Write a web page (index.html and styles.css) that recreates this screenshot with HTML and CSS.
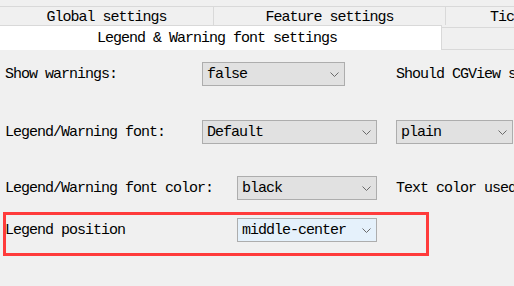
FILE: index.html
```html
<!DOCTYPE html>
<html>
<head>
<meta charset="utf-8">
<link rel="stylesheet" href="styles.css">
</head>
<body>
<div class="tabs">
  <div class="tab-row back">
    <div class="tab t-global"><span>Global settings</span></div>
    <div class="tab t-feature"><span>Feature settings</span></div>
    <div class="tab t-tic"><span>Tic</span></div>
  </div>
  <div class="tab-row front">
    <div class="tab selected"><span>Legend &amp; Warning font settings</span></div>
    <div class="tab filler"></div>
  </div>
</div>
<div class="panel">
  <div class="row r1">
    <div class="label w1">Show warnings:</div>
    <div class="combo c-false"><span>false</span><svg class="chev" width="9" height="5" viewBox="0 0 9 5"><polyline points="0.5,0.5 4.5,4.5 8.5,0.5" fill="none" stroke="#6a6a6a" stroke-width="1"/></svg></div>
    <div class="desc d1">Should CGView s</div>
  </div>
  <div class="row r2">
    <div class="label w1">Legend/Warning font:</div>
    <div class="combo c-default"><span>Default</span><svg class="chev" width="9" height="5" viewBox="0 0 9 5"><polyline points="0.5,0.5 4.5,4.5 8.5,0.5" fill="none" stroke="#6a6a6a" stroke-width="1"/></svg></div>
    <div class="combo c-plain"><span>plain</span><svg class="chev" width="9" height="5" viewBox="0 0 9 5"><polyline points="0.5,0.5 4.5,4.5 8.5,0.5" fill="none" stroke="#6a6a6a" stroke-width="1"/></svg></div>
  </div>
  <div class="row r3">
    <div class="label w2">Legend/Warning font color:</div>
    <div class="combo c-black"><span>black</span><svg class="chev" width="9" height="5" viewBox="0 0 9 5"><polyline points="0.5,0.5 4.5,4.5 8.5,0.5" fill="none" stroke="#6a6a6a" stroke-width="1"/></svg></div>
    <div class="desc d3">Text color used</div>
  </div>
  <div class="row r4">
    <div class="label w2">Legend position</div>
    <div class="combo c-middle hover"><span>middle-center</span><svg class="chev" width="9" height="5" viewBox="0 0 9 5"><polyline points="0.5,0.5 4.5,4.5 8.5,0.5" fill="none" stroke="#6a6a6a" stroke-width="1"/></svg></div>
  </div>
  <div class="highlight"></div>
</div>
</body>
</html>
```
FILE: styles.css
```css
html, body {
  margin: 0;
  padding: 0;
  background: #f0f0f0;
  width: 514px;
  height: 286px;
  overflow: hidden;
}
body {
  font-family: "Liberation Mono", "DejaVu Sans Mono", monospace;
  font-size: 15px;
  letter-spacing: -1px;
  color: #000;
  position: relative;
}
.tabs {
  padding-top: 6px;
}
.tab-row {
  display: flex;
  white-space: nowrap;
}
.back {
  height: 18px;
  border-top: 1px solid #d9d9d9;
}
.back .tab {
  height: 18px;
  display: flex;
  align-items: center;
  justify-content: center;
  border-right: 1px solid #d9d9d9;
  box-sizing: border-box;
  overflow: hidden;
  padding-top: 2px;
}
.t-global { width: 214px; }
.t-feature { width: 232px; }
.t-tic { flex: 1; justify-content: flex-start !important; padding-left: 44px; border-right: none !important; }
.front {
  height: 25px;
}
.selected {
  width: 442px;
  box-sizing: border-box;
  background: #fff;
  border-right: 1px solid #d9d9d9;
  border-top: 1px solid #d9d9d9;
  display: flex;
  align-items: center;
  justify-content: center;
  padding-right: 7px;
}
.filler {
  flex: 1;
  margin-top: 2px;
  height: 23px;
  box-sizing: border-box;
  border-top: 1px solid #d9d9d9;
  border-bottom: 1px solid #d9d9d9;
  background: #f0f0f0;
}
.panel {
  position: relative;
  padding-top: 12px;
  height: 236px;
  box-sizing: border-box;
}
.row {
  display: flex;
  align-items: center;
  height: 24px;
  white-space: nowrap;
}
.r2 { margin-top: 34px; }
.r3 { margin-top: 32px; }
.r4 { margin-top: 18px; }
.label {
  padding-left: 5px;
  box-sizing: border-box;
  flex: none;
}
.w1 { width: 202px; }
.w2 { width: 237px; }
.combo {
  height: 24px;
  box-sizing: border-box;
  border: 1px solid #adadad;
  background: #e1e1e1;
  display: flex;
  align-items: center;
  justify-content: space-between;
  padding-left: 4px;
  padding-right: 5px;
  flex: none;
}
.combo.hover {
  background: #e5f1fb;
}
.chev { display: block; }
.c-false { width: 143px; }
.c-default { width: 175px; }
.c-plain { width: 117px; margin-left: 19px; }
.c-black { width: 140px; }
.c-middle { width: 140px; }
.desc { flex: none; }
.d1 { margin-left: 51px; }
.d3 { margin-left: 19px; }
.highlight {
  position: absolute;
  left: 3px;
  top: 162px;
  width: 426px;
  height: 44px;
  box-sizing: border-box;
  border: 3px solid #ff3b3b;
}
```
